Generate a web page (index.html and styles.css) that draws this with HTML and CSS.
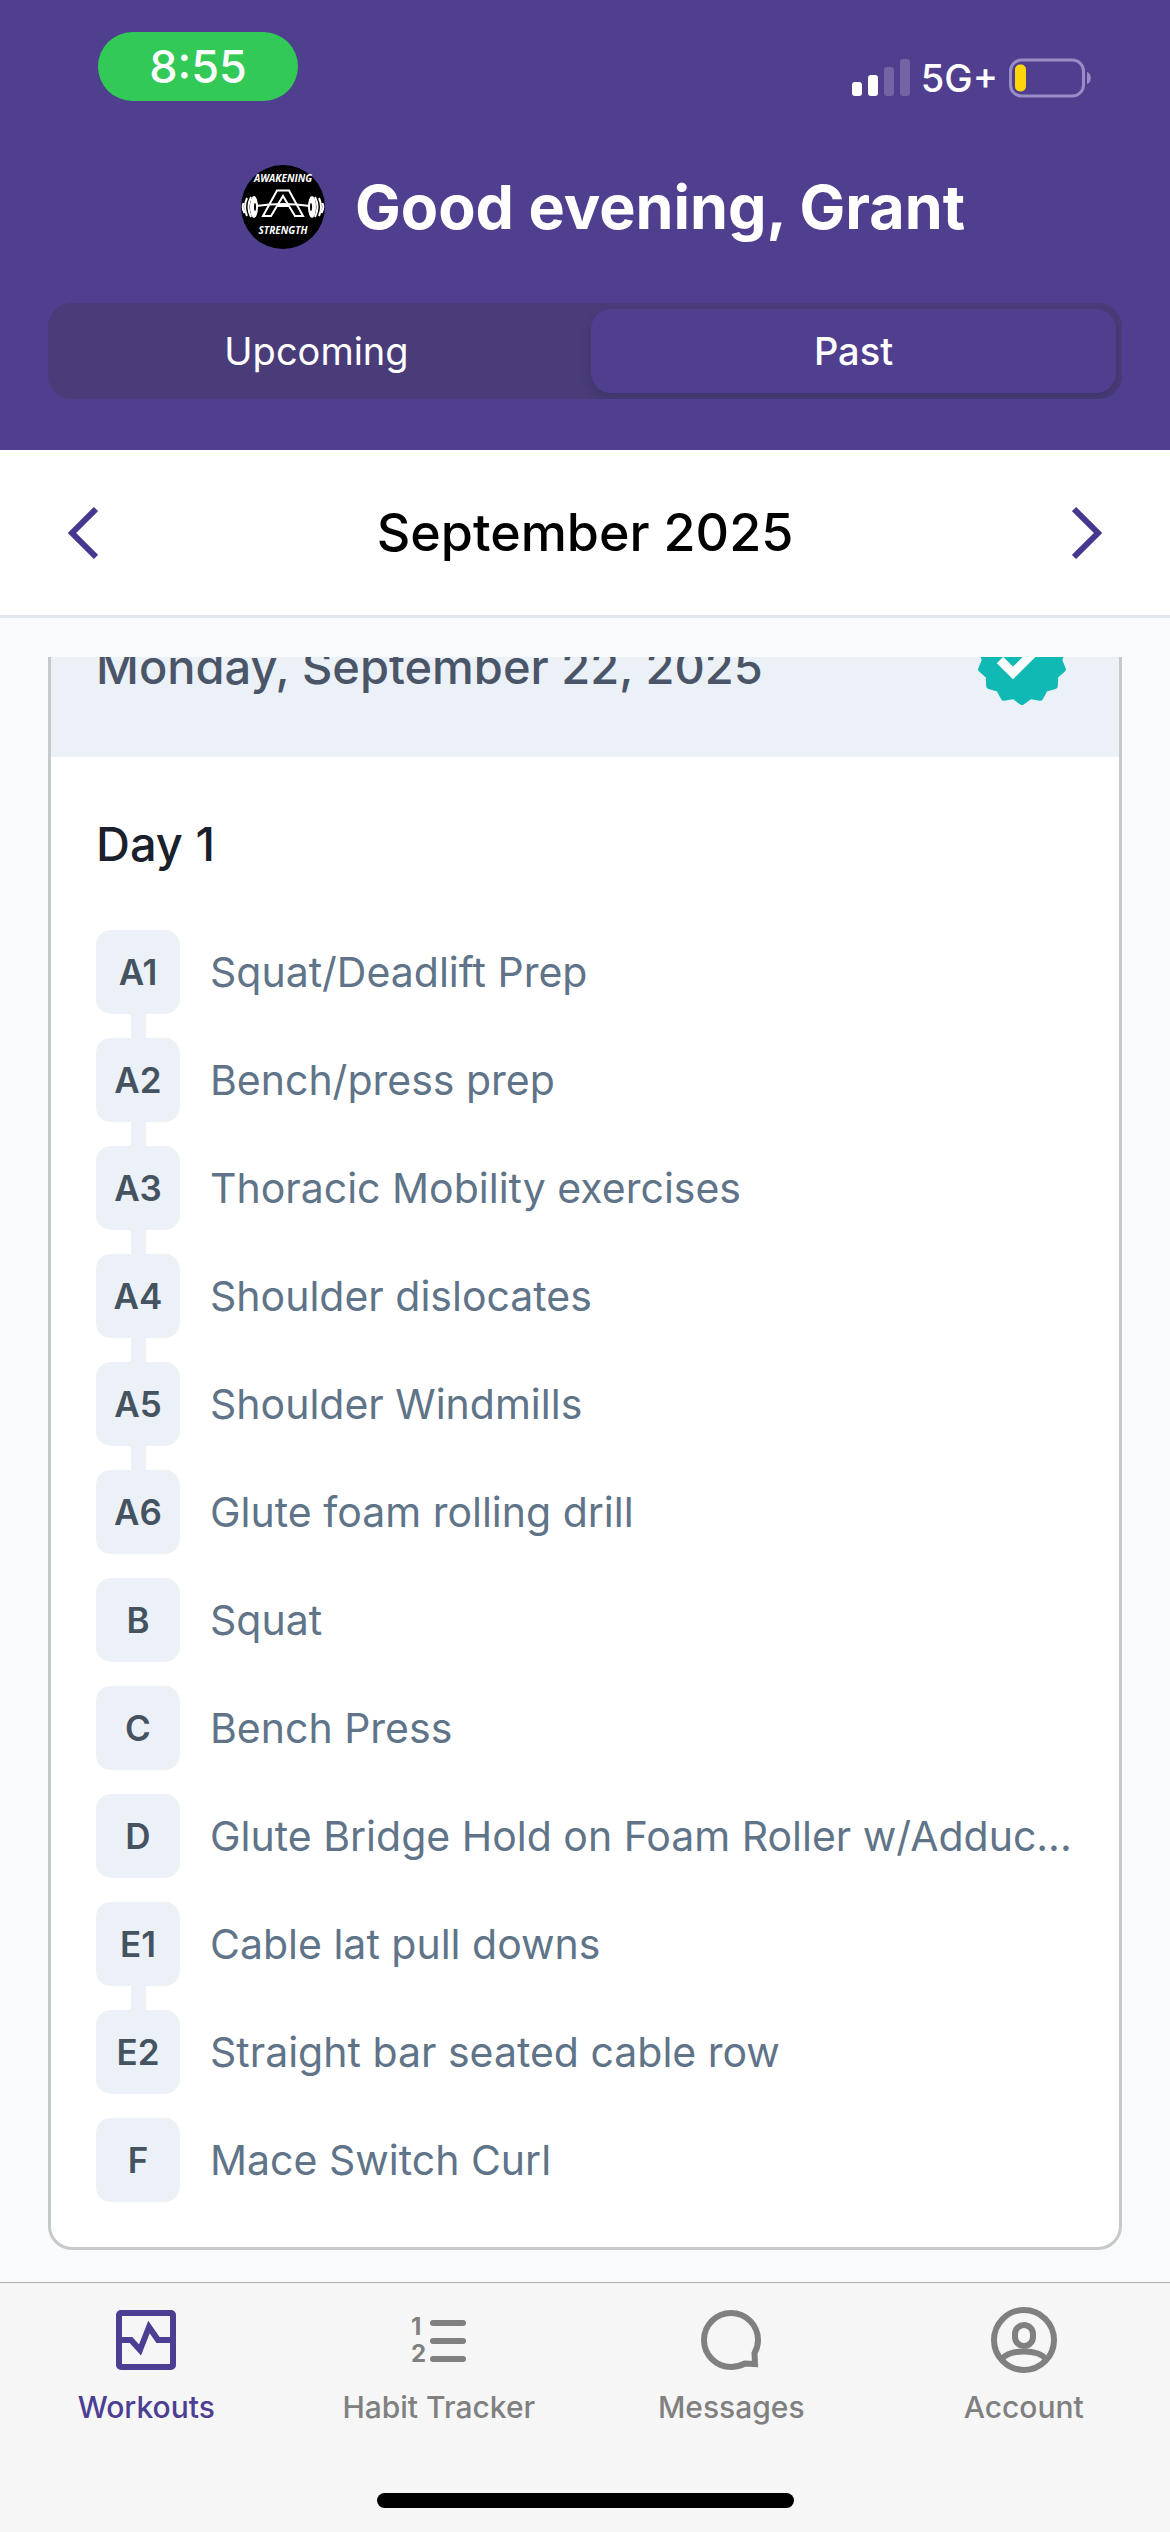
FILE: index.html
```html
<!DOCTYPE html>
<html lang="en">
<head>
    <meta charset="utf-8">
    <title>Workouts</title>
    <link rel="stylesheet" href="styles.css">
</head>
<body>
    <header class="top">
        <div class="status-bar">
            <span class="clock">8:55</span>
            <div class="status-icons">
                <svg class="signal" viewBox="0 0 58 38" aria-hidden="true">
                    <rect x="0" y="23" width="10" height="14" rx="3"/>
                    <rect x="16" y="16" width="10" height="21" rx="3"/>
                    <rect class="dim" x="32" y="8" width="10" height="29" rx="3"/>
                    <rect class="dim" x="48" y="0" width="10" height="37" rx="3"/>
                </svg>
                <span class="network">5G+</span>
                <svg class="battery" viewBox="0 0 83 40" aria-hidden="true">
                    <rect class="shell" x="1.5" y="2" width="73" height="36" rx="11"/>
                    <path class="nub" d="M78 14c5 1 5 11 0 12z"/>
                    <rect class="charge" x="6" y="6.500" width="11" height="27" rx="5"/>
                </svg>
            </div>
        </div>
        <div class="greeting">
            <svg class="logo" viewBox="0 0 84 84" role="img" aria-label="Awakening Strength">
                <circle cx="42" cy="42" r="42"/>
                <text x="42" y="17" text-anchor="middle">AWAKENING</text>
                <text x="42" y="69" text-anchor="middle">STRENGTH</text>
                <g class="bar">
                    <path d="M15 41q27-4 54 0"/>
                    <path d="M22 51L36 25.500h12L62 51h-8L42 31 30 51zM36 41h12"/>
                    <path d="M10 32q-5 10 0 20M6 33q-4 9 0 18M2.500 38q-2 5 1 10"/>
                    <path d="M74 32q5 10 0 20M78 33q4 9 0 18M81.500 38q2 5-1 10"/>
                </g>
                <ellipse class="plate" cx="13" cy="42" rx="4" ry="11"/>
                <ellipse class="plate" cx="71" cy="42" rx="4" ry="11"/>
                <ellipse cx="14" cy="42" rx="1" ry="4"/>
                <ellipse cx="70" cy="42" rx="1" ry="4"/>
            </svg>
            <h1>Good evening, Grant</h1>
        </div>
        <div class="segments">
            <button type="button">Upcoming</button>
            <button type="button" class="selected">Past</button>
        </div>
    </header>

    <div class="month">
        <button type="button" aria-label="Previous month">
            <svg viewBox="0 0 30 54"><path d="M28 3L4 27l24 24"/></svg>
        </button>
        <h2>September 2025</h2>
        <button type="button" aria-label="Next month">
            <svg viewBox="0 0 30 54"><path d="M2 3l24 24L2 51"/></svg>
        </button>
    </div>

    <main class="scroller">
        <article class="card">
            <div class="card-header">
                <h3>Monday, September 22, 2025</h3>
                <svg class="done" viewBox="0 0 104 104" role="img" aria-label="Completed">
                    <path class="seal" d="M52 94L60.200 88.100 70.200 89.800 75.100 80.900 84.800 78.200 85.300 68.100 92.900 61.300 89 52 92.900 42.700 85.300 35.900 84.800 25.800 75.100 23.100 70.200 14.200 60.200 15.900 52 10 43.800 15.900 33.800 14.200 28.900 23.100 19.200 25.800 18.700 35.900 11.100 42.700 15 52 11.100 61.300 18.700 68.100 19.200 78.200 28.900 80.900 33.800 89.800 43.800 88.100z"/>
                    <path class="tick" d="M30 52l13 13 31-31"/>
                </svg>
            </div>
            <div class="card-body">
                <h4>Day 1</h4>
                <ul class="exercises">
                    <li class="linked"><span class="tag">A1</span><span class="name">Squat/Deadlift Prep</span></li>
                    <li class="linked"><span class="tag">A2</span><span class="name">Bench/press prep</span></li>
                    <li class="linked"><span class="tag">A3</span><span class="name">Thoracic Mobility exercises</span></li>
                    <li class="linked"><span class="tag">A4</span><span class="name">Shoulder dislocates</span></li>
                    <li class="linked"><span class="tag">A5</span><span class="name">Shoulder Windmills</span></li>
                    <li><span class="tag">A6</span><span class="name">Glute foam rolling drill</span></li>
                    <li><span class="tag">B</span><span class="name">Squat</span></li>
                    <li><span class="tag">C</span><span class="name">Bench Press</span></li>
                    <li><span class="tag">D</span><span class="name">Glute Bridge Hold on Foam Roller w/Adduc...</span></li>
                    <li class="linked"><span class="tag">E1</span><span class="name">Cable lat pull downs</span></li>
                    <li><span class="tag">E2</span><span class="name">Straight bar seated cable row</span></li>
                    <li><span class="tag">F</span><span class="name">Mace Switch Curl</span></li>
                </ul>
            </div>
        </article>
    </main>

    <footer class="bottom">
        <nav class="tabs">
            <a href="#workouts" class="active">
                <svg viewBox="0 0 72 72"><rect x="9" y="9" width="54" height="54" rx="2"/><path d="M9 36h12l9 10 9-23 9 13h15"/></svg>
                Workouts
            </a>
            <a href="#habits">
                <svg viewBox="0 0 72 72"><path class="round" d="M30 19h30M30 37h30M30 55h30"/><text x="8" y="31">1</text><text x="8" y="58">2</text></svg>
                Habit Tracker
            </a>
            <a href="#messages">
                <svg viewBox="0 0 72 72"><path d="M50 59.500Q43 63 36 63A27 27 0 1 1 63 36Q63 43 59.500 49L60 60z"/></svg>
                Messages
            </a>
            <a href="#account">
                <svg viewBox="0 0 72 72"><circle cx="36" cy="36" r="30"/><rect x="27" y="21" width="18" height="21" rx="9"/><path d="M14 55c8-10 36-10 44 0"/></svg>
                Account
            </a>
        </nav>
        <div class="home-indicator"></div>
    </footer>
</body>
</html>
```
FILE: styles.css
```css
* {
    box-sizing: border-box;
}
body {
    margin: 0;
    min-height: 100vh;
    display: flex;
    flex-direction: column;
    font-family: Inter, "Liberation Sans", sans-serif;
    background-color: #f8fafc;
}
h1, h2, h3, h4, ul {
    margin: 0;
    padding: 0;
    font-weight: 500;
}
button {
    border: none;
    padding: 0;
    background: none;
    font-family: inherit;
    cursor: pointer;
}
svg {
    display: block;
    flex: none;
}

/* header */
.top {
    background-color: #503e8f;
    color: white;
    padding: 32px 48px 51px;
}
.status-bar {
    display: flex;
    justify-content: space-between;
    align-items: flex-end;
    padding: 0 30px 0 50px;
    margin-bottom: 64px;
}
.clock {
    width: 200px;
    line-height: 69px;
    border-radius: 35px;
    background-color: #32c957;
    font-size: 45px;
    font-weight: 500;
    text-align: center;
}
.status-icons {
    display: flex;
    align-items: center;
    gap: 11px;
    margin-bottom: 3px;
}
.signal {
    width: 58px;
    height: 38px;
    fill: white;
}
.signal .dim {
    opacity: 0.2;
}
.network {
    font-size: 38px;
    line-height: 40px;
    font-weight: 500;
}
.battery {
    width: 83px;
    height: 40px;
}
.battery .shell {
    fill: none;
    stroke: #9a8cc4;
    stroke-width: 3;
}
.battery .nub {
    fill: #9a8cc4;
}
.battery .charge {
    fill: #ffd60a;
}
.greeting {
    display: flex;
    justify-content: center;
    align-items: center;
    gap: 30px;
    padding-left: 36px;
    margin-bottom: 54px;
}
.logo {
    width: 84px;
    height: 84px;
}
.logo text {
    fill: white;
    font-family: "Open Sans", sans-serif;
    font-size: 10px;
    font-weight: 700;
    font-style: italic;
}
.logo .bar {
    fill: none;
    stroke: white;
    stroke-width: 2;
}
.logo .plate {
    fill: white;
}
h1 {
    font-size: 61px;
    line-height: 84px;
    font-weight: 700;
}
.segments {
    display: grid;
    grid-template-columns: 1fr 1fr;
    gap: 12px;
    padding: 6px;
    border-radius: 24px;
    background-color: #493c78;
    overflow: hidden;
}
.segments button {
    height: 84px;
    border-radius: 20px;
    color: white;
    font-size: 38px;
}
.segments .selected {
    background-color: #503e8f;
    box-shadow: 0 6px 12px rgba(0, 0, 0, 0.12);
    font-weight: 500;
}

/* month picker */
.month {
    display: flex;
    justify-content: space-between;
    align-items: center;
    height: 168px;
    padding: 0 68px;
    border-bottom: 3px solid #e3e7ee;
    background-color: white;
}
.month svg {
    width: 30px;
    height: 54px;
    fill: none;
    stroke: #47388f;
    stroke-width: 6;
}
h2 {
    font-size: 52px;
}

/* workout card, scrolled partly under the month picker */
.scroller {
    flex: 1;
    margin-top: 39px;
    padding: 0 48px 32px;
    overflow: hidden;
}
.card {
    margin-top: -97px;
    border: 3px solid #c6c9ca;
    border-radius: 24px;
    background-color: white;
    overflow: hidden;
}
.card-header {
    display: flex;
    justify-content: space-between;
    align-items: center;
    padding: 45px;
    background-color: #ecf1f7;
}
h3 {
    padding-top: 14px;
    font-size: 47px;
    line-height: 60px;
    color: #4a5568;
}
.done {
    width: 104px;
    height: 104px;
}
.done .seal {
    fill: #10b9b3;
    stroke: #10b9b3;
    stroke-width: 6;
    stroke-linejoin: round;
}
.done .tick {
    fill: none;
    stroke: white;
    stroke-width: 9;
}
.card-body {
    padding: 54px 45px 45px;
}
h4 {
    margin-bottom: 53px;
    font-size: 47px;
    line-height: 66px;
    color: #1a202c;
}
.exercises {
    display: flex;
    flex-direction: column;
    gap: 24px;
    list-style: none;
}
.exercises li {
    display: flex;
    align-items: center;
    gap: 30px;
    font-weight: 400;
}
.tag {
    position: relative;
    flex: none;
    width: 84px;
    border-radius: 15px;
    background-color: #ecf1f7;
    color: #44535f;
    font-size: 35px;
    line-height: 84px;
    font-weight: 600;
    text-align: center;
}
.linked .tag::after {
    content: "";
    position: absolute;
    top: 100%;
    left: 35px;
    width: 15px;
    height: 24px;
    background-color: #ecf1f7;
}
.name {
    overflow: hidden;
    white-space: nowrap;
    text-overflow: ellipsis;
    font-size: 41px;
    line-height: 60px;
    color: #5f7488;
}

/* tab bar */
.bottom {
    border-top: 1px solid #a9abac;
    background-color: #f6f6f6;
    padding: 21px 0 24px;
}
.tabs {
    display: grid;
    grid-template-columns: repeat(4, 1fr);
}
.tabs a {
    display: flex;
    flex-direction: column;
    align-items: center;
    gap: 9px;
    color: #808080;
    font-size: 30px;
    line-height: 45px;
    font-weight: 500;
    text-decoration: none;
}
.tabs .active {
    color: #4c3e93;
}
.tabs svg {
    width: 72px;
    height: 72px;
    fill: none;
    stroke: currentColor;
    stroke-width: 6;
}
.tabs .round {
    stroke-linecap: round;
}
.tabs text {
    fill: currentColor;
    stroke: none;
    font-size: 24px;
    font-weight: 700;
}
.home-indicator {
    width: 417px;
    height: 15px;
    margin: 63px auto 0;
    border-radius: 8px;
    background-color: black;
}
```
